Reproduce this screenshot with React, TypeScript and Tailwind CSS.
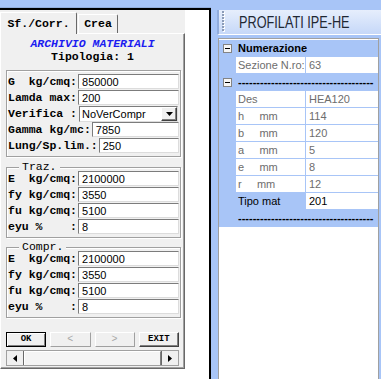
import React from "react";

const mono = "font-['Liberation_Mono','Courier_New',monospace]";
const sans = "font-['Liberation_Sans',Arial,sans-serif]";

function Field({ label, value }: { label: string; value: string }) {
  return (
    <div className="h-[16px] flex items-start">
      <span className={`${mono} whitespace-pre font-bold text-[11.5px] leading-[15px] text-black`}>{label}</span>
      <div
        className={`${sans} ml-[1px] flex-1 h-[15px] bg-white border border-t-[#7c7c7c] border-l-[#7c7c7c] border-b-[#dcdcdc] border-r-[#dcdcdc] pl-[3px] text-[11px] leading-[14px] text-black`}
      >
        {value}
      </div>
    </div>
  );
}

function Group({ legend, children, className = "" }: { legend?: string; children: React.ReactNode; className?: string }) {
  return (
    <div
      className={`relative ml-[5px] w-[175px] border border-[#a0a0a0] shadow-[inset_1px_1px_0_#ffffff,1px_1px_0_#ffffff] pl-[1px] pr-[1px] pt-[3px] pb-[2px] ${className}`}
    >
      {legend && (
        <span
          className={`${mono} absolute left-[12px] top-[-8px] px-[3px] bg-[#f0f0f0] text-[11.5px] leading-[14px] text-black`}
        >
          {legend}
        </span>
      )}
      {children}
    </div>
  );
}

function Btn({ label, kind }: { label: string; kind: "default" | "normal" | "disabled" }) {
  const base = `${mono} h-[15px] flex items-center justify-center text-[9px] font-bold leading-none bg-[#f0f0f0]`;
  if (kind === "default")
    return (
      <div className={`${base} border border-black shadow-[inset_1px_1px_0_#ffffff,inset_-1px_-1px_0_#808080] text-black`}>
        {label}
      </div>
    );
  if (kind === "disabled")
    return (
      <div
        className={`${base} border border-t-white border-l-white border-r-[#a0a0a0] border-b-[#a0a0a0] font-normal text-[#a8a8a8] text-[10px]`}
      >
        {label}
      </div>
    );
  return (
    <div
      className={`${base} border border-t-white border-l-white border-r-[#404040] border-b-[#404040] shadow-[inset_-1px_-1px_0_#808080] text-black`}
    >
      {label}
    </div>
  );
}

function LeftForm() {
  return (
    <div className="w-[185px] h-[359px] bg-[#f0f0f0] flex flex-col">
      {/* tab strip */}
      <div className={`${mono} h-[23px] flex items-end shrink-0`}>
        <div className="relative z-10 mb-[-1px] w-[77px] h-[22px] bg-[#f0f0f0] border-t border-l border-white border-r border-r-[#696969] rounded-tr-[2px] flex items-center justify-center text-[11.5px] font-bold text-black">
          Sf./Corr.
        </div>
        <div className="ml-[1px] w-[40px] h-[19px] bg-[#f0f0f0] border-t border-l border-white border-r border-r-[#696969] rounded-tr-[2px] flex items-center justify-center text-[11.5px] font-bold text-black">
          Crea
        </div>
      </div>
      {/* tab page */}
      <div className="flex-1 flex flex-col border-t border-l border-white border-r border-b border-r-[#696969] border-b-[#696969] shadow-[inset_-1px_-1px_0_#a0a0a0]">
        <div className={`${mono} pt-[3px] text-center text-[11.5px] leading-[13px] italic font-bold text-[#1c1cf0]`}>
          ARCHIVIO MATERIALI
        </div>
        <div className={`${mono} text-center text-[11.5px] leading-[14px] font-bold text-black`}>Tipologia: 1</div>

        <Group className="mt-[6px]">
          <Field label="G  kg/cmq:" value="850000" />
          <Field label="Lamda max:" value="200" />
          <div className="h-[16px] flex items-start">
            <span className={`${mono} whitespace-pre font-bold text-[11.5px] leading-[15px] text-black`}>Verifica :</span>
            <div
              className={`${sans} ml-[2px] mr-[1px] flex-1 h-[16px] bg-white border border-t-[#7c7c7c] border-l-[#7c7c7c] border-b-[#dcdcdc] border-r-[#dcdcdc] pl-[2px] flex items-center text-[11px] text-black`}
            >
              <span className="flex-1 leading-[14px]">NoVerCompr</span>
              <div className="w-[16px] h-[14px] bg-[#f0f0f0] border border-t-white border-l-white border-r-[#404040] border-b-[#404040] shadow-[inset_-1px_-1px_0_#808080] flex items-center justify-center">
                <svg width="7" height="4" viewBox="0 0 7 4">
                  <path d="M0 0h7L3.5 4z" fill="#000" />
                </svg>
              </div>
            </div>
          </div>
          <Field label="Gamma kg/mc:" value="7850" />
          <Field label="Lung/Sp.lim.:" value="250" />
        </Group>

        <Group legend="Traz." className="mt-[10px]">
          <Field label="E  kg/cmq:" value="2100000" />
          <Field label="fy kg/cmq:" value="3550" />
          <Field label="fu kg/cmq:" value="5100" />
          <Field label="eyu %    :" value="8" />
        </Group>

        <Group legend="Compr." className="mt-[9px]">
          <Field label="E  kg/cmq:" value="2100000" />
          <Field label="fy kg/cmq:" value="3550" />
          <Field label="fu kg/cmq:" value="5100" />
          <Field label="eyu %    :" value="8" />
        </Group>

        <div className="mt-[14px] px-[5px] grid grid-cols-4 gap-x-[4px]">
          <Btn label="OK" kind="default" />
          <Btn label="<" kind="disabled" />
          <Btn label=">" kind="disabled" />
          <Btn label="EXIT" kind="normal" />
        </div>

        <div className="mt-[3px] mx-[5px] h-[16px] flex border border-[#a0a0a0] bg-[#f4f4f4]">
          <div className="w-[17px] h-full border-r border-[#696969] bg-[#f0f0f0] flex items-center justify-center">
            <svg width="4" height="7" viewBox="0 0 4 7">
              <path d="M4 0v7L0 3.5z" fill="#000" />
            </svg>
          </div>
          <div className="flex-1 border-t border-l border-white border-r border-r-[#808080]" />
          <div className="w-[17px] h-full border-l border-[#696969] bg-[#f0f0f0] flex items-center justify-center">
            <svg width="4" height="7" viewBox="0 0 4 7">
              <path d="M0 0v7L4 3.5z" fill="#000" />
            </svg>
          </div>
        </div>
      </div>
    </div>
  );
}

function Minus() {
  return (
    <div className="w-[9px] h-[9px] border border-[#848484] bg-[#f6f6f6] flex items-center justify-center">
      <div className="w-[5px] h-[1px] bg-black" />
    </div>
  );
}

const DASHES = "-------------------------------------";

function CatRow({ text, icon = true }: { text: string; icon?: boolean }) {
  return (
    <div className="h-[17px] flex items-center">
      <div className="w-[17px] pl-[4px] flex items-center">{icon && <Minus />}</div>
      <div className="pl-[2px] text-[11px] leading-[17px] text-black whitespace-pre overflow-hidden font-bold">{text}</div>
    </div>
  );
}

function PropRow({ name, value, active = false }: { name: string; value: string; active?: boolean }) {
  return (
    <div className="h-[17px] flex">
      <div className="w-[17px]" />
      <div
        className={`w-[69px] h-[16px] pl-[2px] text-[11px] leading-[16px] whitespace-pre ${
          active ? "text-black" : "bg-white text-[#6d6d6d]"
        }`}
      >
        {name}
      </div>
      <div className="ml-[1px] flex-1 h-[16px] bg-white pl-[3px] text-[11px] leading-[16px] whitespace-pre">
        <span className={active ? "text-black" : "text-[#6d6d6d]"}>{value}</span>
      </div>
    </div>
  );
}

function Grip() {
  return (
    <svg width="3" height="22" viewBox="0 0 3 22" className="shrink-0">
      {[0, 3, 6, 9, 12, 15, 18].map((y) => (
        <g key={y}>
          <rect x="1" y={y + 1} width="2" height="2" fill="#ffffff" />
          <rect x="0" y={y} width="2" height="2" fill="#8c9cb8" />
        </g>
      ))}
    </svg>
  );
}

export default function App() {
  return (
    <div className={`${sans} w-[381px] h-[379px] overflow-hidden bg-[#a8c5f7] flex`}>
      {/* left window */}
      <div className="w-[211px] shrink-0 flex flex-col">
        <div className="h-[8px] shrink-0 border-b border-[#94afdc]" />
        <div className="flex-1 bg-white border-t-2 border-r-2 border-black">
          <LeftForm />
        </div>
      </div>
      {/* right panel */}
      <div className="flex-1 min-w-0 flex flex-col pl-[6px] pt-[10px]">
        <div className="h-[25px] shrink-0 border-l-2 border-[#91acdc] border-b border-b-white bg-gradient-to-b from-[#e6eefc] to-[#c6d8f8] flex items-center pl-[3px] overflow-hidden">
          <Grip />
          <span className="ml-[14px] whitespace-nowrap origin-left scale-x-[0.77] text-[16.5px] leading-none text-[#1f2733]">
            PROFILATI IPE-HE
          </span>
        </div>
        <div className="mt-[3px] ml-[1px] mr-[2px] flex-1 border border-b-0 border-[#a0a0a0] bg-white pt-[1px]">
          <div className="bg-[#a8c5f7]">
            <CatRow text="Numerazione" />
            <PropRow name="Sezione N.ro:" value="63" />
            <CatRow text={DASHES} />
            <PropRow name="Des" value="HEA120" />
            <PropRow name="h     mm" value="114" />
            <PropRow name="b     mm" value="120" />
            <PropRow name="a     mm" value="5" />
            <PropRow name="e     mm" value="8" />
            <PropRow name="r     mm" value="12" />
            <PropRow name="Tipo mat" value="201" active />
            <CatRow text={DASHES} icon={false} />
          </div>
        </div>
      </div>
    </div>
  );
}
